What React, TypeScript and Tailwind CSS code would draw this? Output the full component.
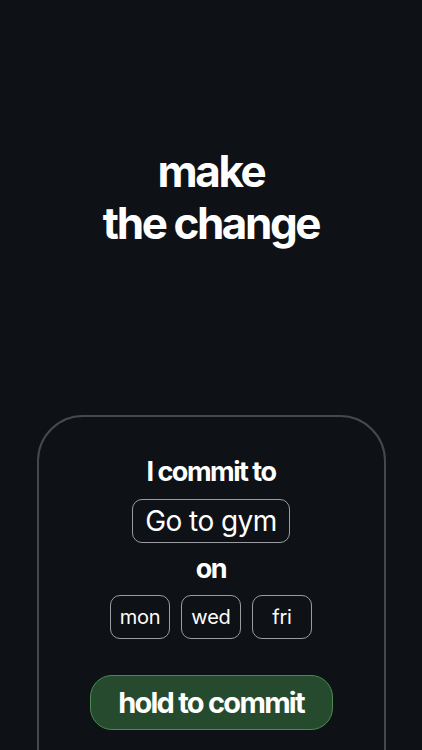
import React from "react";

export default function App() {
  const font = { fontFamily: "Inter, 'Noto Sans', sans-serif" };
  return (
    <div className="w-[422px] h-[750px] overflow-hidden bg-[#0e1116] flex flex-col items-center text-white" style={font}>
      <div className="mt-[145px] flex flex-col items-center text-[44px] leading-[52px] font-bold tracking-[-0.055em]">
        <div>make</div>
        <div>the change</div>
      </div>
      <div className="mt-[166px] w-[349px] h-[400px] shrink-0 rounded-[46px] border-2 border-[#45484d] flex flex-col items-center">
        <div className="mt-[38px] text-[27px] leading-[34px] font-bold tracking-[-0.055em]">I commit to</div>
        <div className="mt-[10px] h-[44px] px-[12px] rounded-[10px] border border-[#9a9ca0] flex items-center text-[28px] tracking-[-0.02em]">Go to gym</div>
        <div className="mt-[9px] text-[27px] leading-[34px] font-bold tracking-[-0.05em]">on</div>
        <div className="mt-[9px] flex gap-[11px]">
          {["mon", "wed", "fri"].map((d) => (
            <div key={d} className="w-[60px] h-[44px] rounded-[10px] border border-[#9a9ca0] flex items-center justify-center text-[20px] tracking-[-0.01em]">
              {d}
            </div>
          ))}
        </div>
        <div className="mt-[36px] w-[243px] h-[55px] rounded-[22px] bg-[#264a2d] border border-[#4c8a52] flex items-center justify-center text-[29px] font-bold tracking-[-0.06em]">
          hold to commit
        </div>
      </div>
    </div>
  );
}
